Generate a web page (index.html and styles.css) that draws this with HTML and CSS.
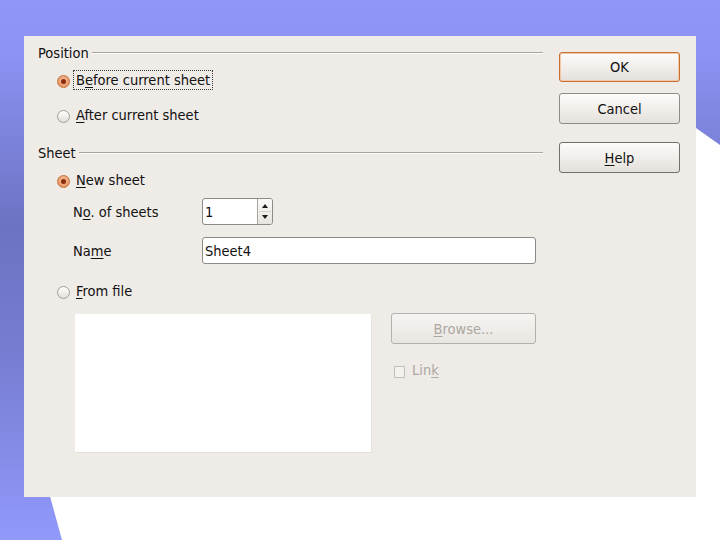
FILE: index.html
```html
<!DOCTYPE html>
<html>
<head>
<meta charset="utf-8">
<link rel="stylesheet" href="styles.css">
</head>
<body>
<div class="backdrop">
  <svg width="720" height="540" viewBox="0 0 720 540">
    <defs>
      <linearGradient id="bg" x1="0" y1="0" x2="0" y2="1">
        <stop offset="0" stop-color="#8f96f8"/>
        <stop offset="0.1" stop-color="#8b92f3"/>
        <stop offset="0.42" stop-color="#6d73c2"/>
        <stop offset="0.65" stop-color="#767cd0"/>
        <stop offset="1" stop-color="#9199fb"/>
      </linearGradient>
    </defs>
    <polygon points="0,0 720,0 720,145 696,128 40,460 62,540 0,540" fill="url(#bg)"/>
  </svg>
</div>

<div class="dialog">
  <div class="main">
    <div class="frame-head"><span>Position</span></div>
    <div class="radio-row r-before">
      <span class="radio on"></span>
      <span class="rlabel focus">B<u>e</u>fore current sheet</span>
    </div>
    <div class="radio-row r-after">
      <span class="radio"></span>
      <span class="rlabel"><u>A</u>fter current sheet</span>
    </div>

    <div class="frame-head h-sheet"><span>Sheet</span></div>
    <div class="radio-row r-new">
      <span class="radio on"></span>
      <span class="rlabel"><u>N</u>ew sheet</span>
    </div>
    <div class="field-row f-count">
      <span class="flabel">N<u>o</u>. of sheets</span>
      <div class="spin">
        <span class="spin-val">1</span>
        <span class="spin-btns">
          <svg width="14" height="25" viewBox="0 0 14 25">
            <polygon points="4,9 10,9 7,5" fill="#1a1a1a"/>
            <line x1="1" y1="12.5" x2="13" y2="12.5" stroke="#d6d2cc"/>
            <polygon points="4,16 10,16 7,20" fill="#1a1a1a"/>
          </svg>
        </span>
      </div>
    </div>
    <div class="field-row f-name">
      <span class="flabel">Na<u>m</u>e</span>
      <div class="entry">Sheet4</div>
    </div>
    <div class="radio-row r-file">
      <span class="radio"></span>
      <span class="rlabel"><u>F</u>rom file</span>
    </div>
    <div class="file-area">
      <div class="listbox"></div>
      <div class="file-side">
        <div class="btn disabled"><span><u>B</u>rowse...</span></div>
        <div class="check-row">
          <span class="checkbox"></span>
          <span class="clabel">Lin<u>k</u></span>
        </div>
      </div>
    </div>
  </div>

  <div class="buttons">
    <div class="btn default">OK</div>
    <div class="btn cancel">Cancel</div>
    <div class="btn help"><span><u>H</u>elp</span></div>
  </div>
</div>
</body>
</html>
```

FILE: styles.css
```css
html, body {
  margin: 0;
  padding: 0;
  background: #ffffff;
}
body {
  width: 720px;
  height: 540px;
  overflow: hidden;
  position: relative;
  padding: 36px 0 0 24px;
  box-sizing: border-box;
  font-family: "DejaVu Sans Condensed", "DejaVu Sans", "Liberation Sans", sans-serif;
  font-stretch: condensed;
  font-size: 14.5px;
  line-height: 16px;
  color: #111111;
}
.backdrop {
  position: absolute;
  left: 0;
  top: 0;
  width: 720px;
  height: 540px;
  z-index: 0;
}
.backdrop svg { display: block; }

.dialog {
  position: relative;
  z-index: 1;
  width: 672px;
  height: 461px;
  background: #efebe7;
  display: flex;
  box-sizing: border-box;
  padding-left: 14px;
}
.main {
  width: 505px;
  display: flex;
  flex-direction: column;
}
u { text-decoration: underline; text-underline-offset: 2px; }

.frame-head {
  display: flex;
  align-items: center;
  height: 16px;
  margin-top: 9px;
}
.frame-head::after {
  content: "";
  flex: 1;
  height: 0;
  border-top: 1px solid #aaa59f;
  border-bottom: 1px solid #fbfaf8;
  margin-left: 3px;
}
.frame-head.h-sheet { margin-top: 19px; }

.radio-row {
  display: flex;
  align-items: center;
  height: 22px;
  padding-left: 19px;
}
.r-before { margin-top: 8px; }
.r-after { margin-top: 13px; }
.r-new { margin-top: 8px; }
.r-file { margin-top: 16px; }

.radio {
  width: 13px;
  height: 13px;
  box-sizing: border-box;
  border-radius: 50%;
  border: 1px solid #a29e98;
  background: linear-gradient(#ffffff, #e2ded9);
  margin-right: 3px;
  margin-top: 3px;
  position: relative;
  flex: none;
}
.radio.on {
  border-color: #c3713a;
  background: radial-gradient(circle at 50% 40%, #f6c09c, #e08a52);
}
.radio.on::after {
  content: "";
  position: absolute;
  left: 3px;
  top: 3px;
  width: 5px;
  height: 5px;
  border-radius: 50%;
  background: #8a2b0e;
}
.rlabel {
  padding: 1px 2px;
  border: 1px dotted transparent;
}
.rlabel.focus { border-color: #3a3a3a; }

.field-row {
  display: flex;
  align-items: center;
  height: 27px;
  padding-left: 35px;
}
.f-count { margin-top: 7px; }
.f-name { margin-top: 12px; }
.flabel { width: 129px; flex: none; }

.spin {
  width: 71px;
  height: 27px;
  box-sizing: border-box;
  border: 1px solid #8e8a85;
  border-radius: 3px;
  background: #ffffff;
  display: flex;
  align-items: center;
}
.spin-val { flex: 1; padding-left: 2px; }
.spin-btns {
  width: 14px;
  height: 25px;
  border-left: 1px solid #a9a59f;
  background: linear-gradient(#fbfaf9, #e8e4df);
  border-radius: 0 2px 2px 0;
}
.spin-btns svg { display: block; }

.entry {
  width: 334px;
  height: 27px;
  box-sizing: border-box;
  border: 1px solid #8e8a85;
  border-radius: 3px;
  background: #ffffff;
  padding-left: 2px;
  display: flex;
  align-items: center;
}

.file-area {
  display: flex;
  margin-top: 12px;
  padding-left: 37px;
}
.listbox {
  width: 297px;
  height: 139px;
  background: #ffffff;
  box-sizing: border-box;
  border-bottom: 1px solid #e3dfda;
  border-right: 1px solid #e8e4df;
}
.file-side {
  margin-left: 19px;
  width: 145px;
  display: flex;
  flex-direction: column;
}
.file-side .btn { margin-top: -1px; }

.btn {
  height: 31px;
  box-sizing: border-box;
  border: 1px solid #8f8b86;
  border-radius: 3px;
  background: linear-gradient(#fdfcfb 0%, #f1eeeb 50%, #e4e0db 100%);
  display: flex;
  align-items: center;
  justify-content: center;
  color: #111111;
}
.btn.disabled {
  color: #aca8a2;
  border-color: #b4b0aa;
  background: linear-gradient(#f6f4f2, #e9e5e1);
}
.check-row {
  display: flex;
  align-items: center;
  margin-top: 18px;
  padding-left: 3px;
  height: 16px;
  color: #aca8a2;
}
.checkbox {
  width: 11px;
  height: 12px;
  box-sizing: border-box;
  border: 1px solid #c2beb8;
  background: #f4f2ef;
  margin-right: 7px;
  margin-top: 3px;
}

.buttons {
  margin-left: 16px;
  width: 121px;
  display: flex;
  flex-direction: column;
  padding-top: 16px;
}
.btn.default {
  height: 30px;
  border-color: #c66f33;
  box-shadow: 0 0 0 1px #f3c7a3 inset;
}
.btn.cancel { margin-top: 11px; }
.btn.help {
  margin-top: 18px;
  border-color: #74706b;
}
```
